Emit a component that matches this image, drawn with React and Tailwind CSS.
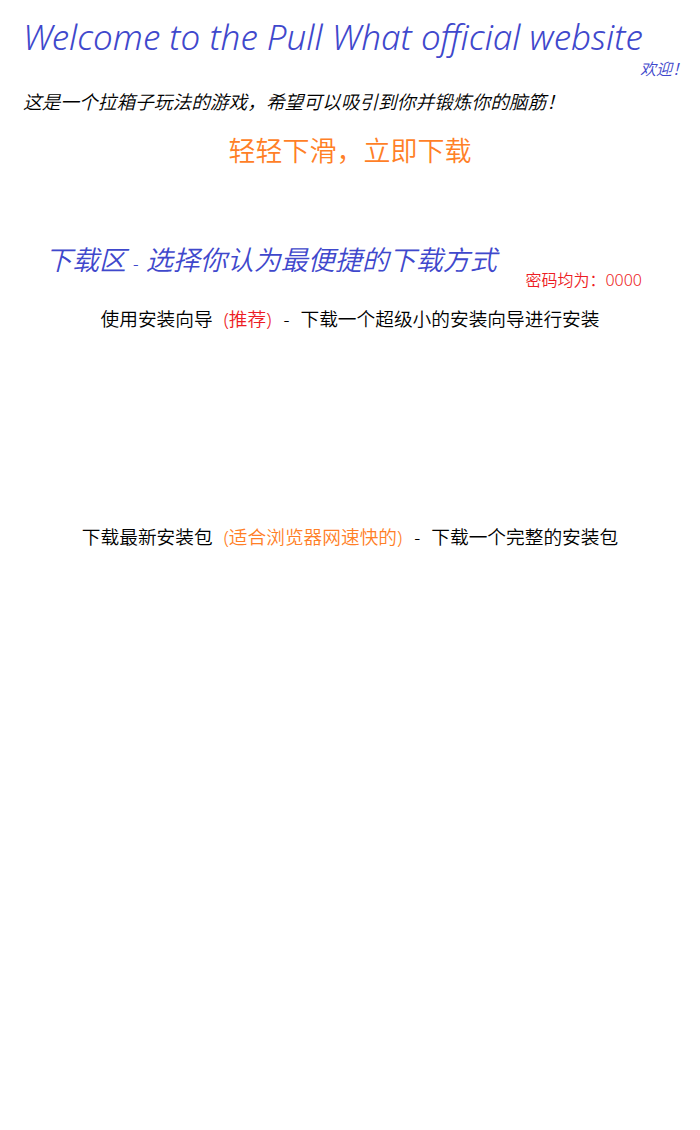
const FONT = "font-['Noto_Sans','Noto_Sans_CJK_SC',sans-serif]";

const DownloadRow = (props) => {
    const { name, note, noteColor, desc } = props;
    return (
        <div className="flex justify-center text-[18.7px] leading-[26px] font-[350] text-black">
            <span>{name}</span>
            <span className={`ml-[11px] ${noteColor}`}>{note}</span>
            <span className="ml-[12px]">-</span>
            <span className="ml-[11px]">{desc}</span>
        </div>
    );
};

export default function App() {
    return (
        <div className={`w-[700px] h-[1130px] bg-white ${FONT}`}>
            {/* 头部 */}
            <div className="pt-[14px] pl-[23px] pr-[12px]">
                <h1 className="text-[35px] leading-[46px] italic font-light text-[#3f48cc]">
                    Welcome to the Pull What official website
                </h1>
                <div className="text-right text-[16px] leading-[18px] italic font-[350] text-[#3f48cc]">欢迎！</div>
                <p className="mt-[10px] text-[18.7px] leading-[28px] italic font-[350] text-black">
                    这是一个拉箱子玩法的游戏，希望可以吸引到你并锻炼你的脑筋！
                </p>
            </div>

            <div className="mt-[18px] text-center text-[27px] leading-[34px] font-[350] text-[#ff7f27]">轻轻下滑，立即下载</div>

            {/* 下载区 */}
            <div className="mt-[74px] flex items-end pl-[45px]">
                <h2 className="text-[27px] leading-[36px] italic font-[350] text-[#3f48cc]">
                    下载区 <span className="text-[18px] align-middle">-</span> 选择你认为最便捷的下载方式
                </h2>
                <span className="ml-auto mr-[58px] mb-[-11px] text-[16px] font-[350] text-[#ed1c24]">密码均为：0000</span>
            </div>

            <div className="mt-[25px]">
                <DownloadRow
                    name="使用安装向导"
                    note="(推荐)"
                    noteColor="text-[#ed1c24]"
                    desc="下载一个超级小的安装向导进行安装"
                />
            </div>

            <div className="mt-[192px]">
                <DownloadRow
                    name="下载最新安装包"
                    note="(适合浏览器网速快的)"
                    noteColor="text-[#ff7f27]"
                    desc="下载一个完整的安装包"
                />
            </div>
        </div>
    );
}
